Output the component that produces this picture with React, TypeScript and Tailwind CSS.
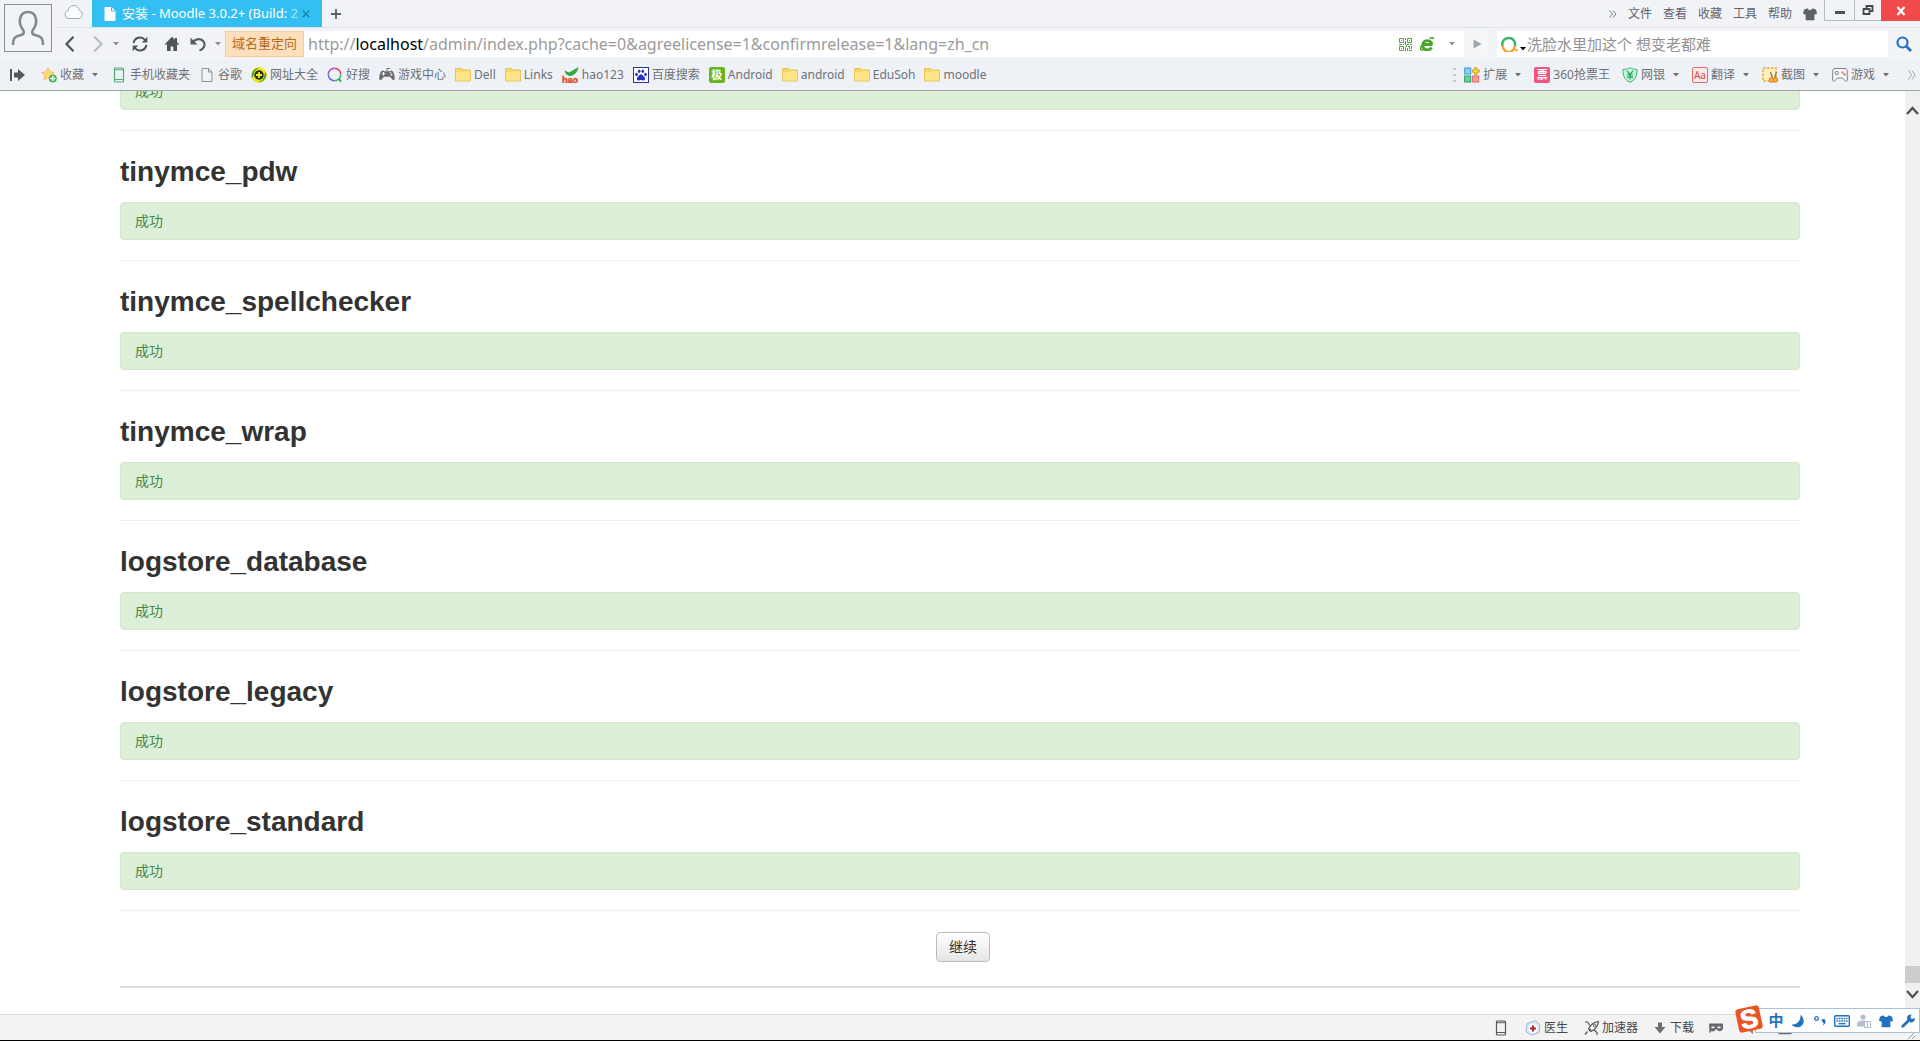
import { ReactNode } from 'react';

interface Bookmark {
  label: string;
  icon: ReactNode;
  menu?: boolean;
}

const PLUGINS = [
  'tinymce_pdw',
  'tinymce_spellchecker',
  'tinymce_wrap',
  'logstore_database',
  'logstore_legacy',
  'logstore_standard',
];

const MENUS = ['文件', '查看', '收藏', '工具', '帮助'];

const SHIRT = 'M5 1.500 1 3 0 8l3 .6V15h10V8.600l3-.6-1-5-4-1.500c-.6 1.300-1.700 2-3 2s-2.400-.7-3-2z';

function Caret({ className = 'text-[#6b7075]' }: { className?: string }) {
  return (
    <svg viewBox="0 0 8 4" className={`h-1 w-2 shrink-0 ${className}`}>
      <path d="M1 0h6L4 3.500z" fill="currentColor" />
    </svg>
  );
}

function FolderIcon() {
  return (
    <svg viewBox="0 0 16 16" className="size-4 shrink-0">
      <path d="M.5 14v-12.500h6l1.500 1.500h7.500V14z" fill="#f8d766" stroke="#e6c35c" />
      <path d="M1 5h6l1.500-1H15v9.500H1z" fill="#ffe588" />
    </svg>
  );
}

function PageIcon({ fill, stroke }: { fill: string; stroke: string }) {
  return (
    <svg viewBox="0 0 16 16" className="size-4 shrink-0">
      <path d="M3 1.500h6.500L13 5v9.500H3z" fill={fill} stroke={stroke} />
      <path d="M9.500 1.500V5H13" fill="none" stroke={fill === 'none' ? stroke : '#33bff2'} />
    </svg>
  );
}

function StarIcon() {
  return (
    <svg viewBox="0 0 16 16" className="size-4 shrink-0">
      <path d="m7 .8 1.900 4.100 4.400.5-3.300 3 .9 4.400L7 10.700l-4 2.100.9-4.400-3.300-3L5 4.900z" fill="#ffd877" stroke="#edb64d" strokeWidth=".8" />
      <circle cx="11.800" cy="11.500" r="4" fill="#4bb45c" />
      <path d="M11.800 9v5M9.300 11.500h5" stroke="#fff" strokeWidth="1.400" />
    </svg>
  );
}

function PhoneIcon({ color }: { color: string }) {
  return (
    <svg viewBox="0 0 16 16" className="size-4 shrink-0">
      <rect x="3.500" y="1" width="9" height="14" rx="1" fill="none" stroke={color} strokeWidth="1.200" />
      <path d="M3.500 12.500h9M3.500 2.700h9" stroke={color} />
    </svg>
  );
}

function SafeSiteIcon() {
  return (
    <svg viewBox="0 0 16 16" className="size-4 shrink-0">
      <circle cx="8" cy="8" r="7.800" fill="#f6e21c" />
      <path d="M1 11C-.5 5 4 .5 9 .5 5 2 2.500 5 2.500 9zM15 5c1.500 6-3 10.500-8 10.500 4-1.500 6.500-4.500 6.500-8.500z" fill="#43a332" />
      <circle cx="8" cy="8" r="4.700" fill="#20301b" />
      <path d="M8 5v6M5 8h6" stroke="#f9ec2e" strokeWidth="1.800" />
    </svg>
  );
}

function HaosouIcon() {
  return (
    <svg viewBox="0 0 16 16" className="size-4 shrink-0">
      <g fill="none" strokeWidth="1.500">
        <path d="M7.500 1.200A6.200 6.200 0 0 1 13.700 7.500" stroke="#e2406b" />
        <path d="M13.700 7.500A6.200 6.200 0 0 1 7.500 13.700" stroke="#3eb460" />
        <path d="M7.500 13.700A6.200 6.200 0 0 1 1.300 7.500" stroke="#5365dc" />
        <path d="M1.300 7.500A6.200 6.200 0 0 1 7.500 1.200" stroke="#a94bc0" />
      </g>
      <path d="m11.500 11.500 2.500 3" stroke="#2db35b" strokeWidth="2" />
    </svg>
  );
}

function GamepadIcon() {
  return (
    <svg viewBox="0 0 16 16" className="size-4 shrink-0">
      <path d="M3.500 3.500C1.500 4 .3 8 .3 11.500c0 2 2 2 3 .3L5 9.800h6l1.700 2c1 1.700 3 1.700 3-.3 0-3.500-1.200-7.500-3.200-8l-2 .8h-5z" fill="#686b70" />
      <path d="M4.500 5v3.500M2.800 6.800h3.400" stroke="#fff" strokeWidth="1.100" />
      <circle cx="11.500" cy="5.600" r=".9" fill="#f3c7c7" />
      <circle cx="12.600" cy="7.700" r=".9" fill="#fff" />
      <path d="M8 4V1.500h3" stroke="#686b70" fill="none" />
    </svg>
  );
}

function HaoIcon() {
  return (
    <svg viewBox="0 0 17 16" className="h-4 w-[17px] shrink-0">
      <path d="M2.500 3.500 7 5.500 16.500 0C15.500 5.500 12 9 8 9 5.500 9 3 6.500 2.500 3.500z" fill="#35a842" />
      <text x="0" y="15.500" fontSize="9" fontWeight="700" fill="#e2512c" stroke="#e2512c" strokeWidth=".5" fontFamily="Liberation Sans, sans-serif">hao</text>
    </svg>
  );
}

function BaiduIcon() {
  return (
    <svg viewBox="0 0 16 16" className="size-4 shrink-0">
      <rect x=".5" y=".5" width="15" height="15" fill="#fff" stroke="#2930ad" />
      <g fill="#2832c0">
        <path d="M8 7.200c1.500 0 2 1.500 3.200 2.500 1.500 1.300 1 3.800-.9 3.800-.9 0-1.400-.4-2.300-.4s-1.400.4-2.300.4c-1.900 0-2.400-2.500-.9-3.800C6 8.700 6.500 7.200 8 7.200z" />
        <ellipse cx="3.500" cy="7.500" rx="1.300" ry="1.700" />
        <ellipse cx="6.200" cy="4.200" rx="1.300" ry="1.800" />
        <ellipse cx="9.800" cy="4.200" rx="1.300" ry="1.800" />
        <ellipse cx="12.500" cy="7.500" rx="1.300" ry="1.700" />
      </g>
    </svg>
  );
}

function GlyphIcon({ text, className }: { text: string; className: string }) {
  return (
    <span className={`flex size-4 shrink-0 items-center justify-center overflow-hidden rounded-xs leading-4 ${className}`}>
      {text}
    </span>
  );
}

function ExtensionsIcon() {
  return (
    <svg viewBox="0 0 16 16" className="size-4 shrink-0">
      <rect x=".7" y="1" width="6" height="6" fill="#8fcdf5" stroke="#3d9ade" />
      <rect x=".7" y="9" width="6" height="6" fill="#5edb98" stroke="#279d62" />
      <rect x="8.700" y="9" width="6" height="6" fill="#f7a2a0" stroke="#dc6262" />
      <path d="M10.700.7h2.200v2.200h2.300v2.300h-2.300v2.300h-2.200V5.200H8.400V2.900h2.300z" fill="#fce03a" stroke="#c49716" strokeWidth=".9" />
    </svg>
  );
}

function ShieldIcon() {
  return (
    <svg viewBox="0 0 16 16" className="size-4 shrink-0">
      <path d="M8 .7c2 1.300 4.500 1.800 7 1.800 0 6-1 10-7 12.800C2 12.500 1 8.500 1 2.500c2.500 0 5-.5 7-1.800z" fill="#c8f5da" stroke="#38b46f" />
      <path d="m5 3.800 3 3.700 3-3.700M8 7.500v5M5 8h6M5 10.200h6" fill="none" stroke="#1fa45b" strokeWidth="1.200" />
    </svg>
  );
}

function CaptureIcon() {
  return (
    <svg viewBox="0 0 16 16" className="size-4 shrink-0">
      <rect x="1" y="1" width="13" height="13" fill="#fff0b8" stroke="#e7a729" strokeWidth="1.500" strokeDasharray="2.500 1.500" />
      <path d="m8.500 5 2 6M14.500 5l-2 6" stroke="#7d776c" strokeWidth="1.300" />
      <circle cx="9.500" cy="13" r="2" fill="#fbc56c" stroke="#e58e1c" strokeWidth="1.400" />
      <circle cx="13.500" cy="13" r="2" fill="#fbc56c" stroke="#e58e1c" strokeWidth="1.400" />
    </svg>
  );
}

function PadIcon() {
  return (
    <svg viewBox="0 0 16 16" className="size-4 shrink-0">
      <path d="M2 1.500h12l1.300 2v10l-1.500 1-3.300-3.500h-5L2.200 14.500l-1.500-1v-10z" fill="#f7f8fb" stroke="#7d828c" />
      <circle cx="4.800" cy="6" r="1.700" fill="none" stroke="#7d828c" />
      <path d="M9.500 4.500h2v2h-2z" fill="#ef6c4c" />
      <path d="M11.500 6.500h2v2h-2z" fill="#c46c5c" />
    </svg>
  );
}

const BOOKMARKS: Bookmark[] = [
  { label: '手机收藏夹', icon: <PhoneIcon color="#52ad76" /> },
  { label: '谷歌', icon: <PageIcon fill="none" stroke="#8e9399" /> },
  { label: '网址大全', icon: <SafeSiteIcon /> },
  { label: '好搜', icon: <HaosouIcon /> },
  { label: '游戏中心', icon: <GamepadIcon /> },
  { label: 'Dell', icon: <FolderIcon /> },
  { label: 'Links', icon: <FolderIcon /> },
  { label: 'hao123', icon: <HaoIcon /> },
  { label: '百度搜索', icon: <BaiduIcon /> },
  { label: 'Android', icon: <GlyphIcon text="极" className="bg-[#68b520] text-[11px] font-bold text-white" /> },
  { label: 'android', icon: <FolderIcon /> },
  { label: 'EduSoh', icon: <FolderIcon /> },
  { label: 'moodle', icon: <FolderIcon /> },
];

const TOOLS: Bookmark[] = [
  { label: '扩展', icon: <ExtensionsIcon />, menu: true },
  { label: '360抢票王', icon: <GlyphIcon text="票" className="bg-[#ef5580] text-[11px] font-bold text-white" /> },
  { label: '网银', icon: <ShieldIcon />, menu: true },
  {
    label: '翻译',
    icon: <GlyphIcon text="Aa" className="border border-[#dd6b6b] bg-[#fdeaea] text-[10px] text-[#d94747]" />,
    menu: true,
  },
  { label: '截图', icon: <CaptureIcon />, menu: true },
  { label: '游戏', icon: <PadIcon />, menu: true },
];

function BookmarkButton({ item }: { item: Bookmark }) {
  return (
    <button className="flex shrink-0 items-center gap-[3px] whitespace-nowrap">
      {item.icon}
      <span>{item.label}</span>
      {item.menu && (
        <span className="pl-1">
          <Caret />
        </span>
      )}
    </button>
  );
}

function TabRow() {
  return (
    <div className="flex h-7 items-start border-b border-[#e0e4e8] pl-2">
      <button aria-label="云同步" className="mt-1 mr-2">
        <svg viewBox="0 0 20 16" className="h-4 w-5">
          <path d="M5 14.500a4 4 0 0 1-.8-7.900C4.500 3.500 7 1.500 9.800 1.500c3 0 5 2 5.300 4.700A4.300 4.300 0 0 1 15 14.500z" fill="#fbfcfd" stroke="#a5abb1" />
        </svg>
      </button>
      <div className="flex h-[27px] w-[230px] items-center bg-[#33bff2] pr-3 pl-2.5 text-white">
        <PageIcon fill="#fff" stroke="#fff" />
        <span className="ml-1 min-w-0 flex-1 overflow-hidden text-[13px] whitespace-nowrap">
          安装 - Moodle 3.0.2+ (Build: <span className="text-[#a9e2f8]">2</span>
        </span>
        <button aria-label="关闭标签" className="ml-1">
          <svg viewBox="0 0 8 8" className="size-2">
            <path d="m.8.8 6.400 6.400M7.200.8.8 7.200" stroke="#197fae" strokeWidth="1.300" />
          </svg>
        </button>
      </div>
      <button aria-label="新标签" className="mt-2 ml-2">
        <svg viewBox="0 0 12 12" className="size-3">
          <path d="M6 1v10M1 6h10" stroke="#5c6166" strokeWidth="1.800" />
        </svg>
      </button>
      <div className="flex-1" />
      <nav className="flex h-[27px] items-center gap-[11px] text-xs text-[#5f646a]">
        <button aria-label="更多">
          <svg viewBox="0 0 8 8" className="size-2">
            <path d="m.5.5 3 3.500-3 3.500M4 .5l3 3.500-3 3.500" fill="none" stroke="#777c82" />
          </svg>
        </button>
        {MENUS.map((menu) => (
          <button key={menu}>{menu}</button>
        ))}
        <button aria-label="皮肤">
          <svg viewBox="0 0 16 16" className="size-3.5">
            <path d={SHIRT} fill="#5f6368" />
          </svg>
        </button>
      </nav>
      <div className="ml-[7px] flex h-[21px]">
        <button aria-label="最小化" className="flex w-[30px] items-center justify-center border-b border-l border-[#b8bcc1]">
          <span className="mt-1 h-[3px] w-2.5 bg-[#4d5156]" />
        </button>
        <button aria-label="还原" className="flex w-[27px] items-center justify-center border-b border-l border-[#b8bcc1]">
          <svg viewBox="0 0 12 12" className="size-3">
            <path d="M4.500 4V2h6v5h-2M1.500 5h6v5h-6z" fill="none" stroke="#45494e" strokeWidth="1.800" />
          </svg>
        </button>
        <button aria-label="关闭" className="flex w-[39px] items-center justify-center bg-[#f04a4a]">
          <svg viewBox="0 0 10 10" className="size-2.5">
            <path d="m1.500 1 7 8M8.500 1l-7 8" stroke="#fff" strokeWidth="2.200" />
          </svg>
        </button>
      </div>
    </div>
  );
}

function AddressRow() {
  return (
    <div className="flex h-8 items-center pl-2">
      <button aria-label="后退" className="mr-4">
        <svg viewBox="0 0 12 16" className="h-4 w-3">
          <path d="M9.500.8 2.500 8l7 7.200" fill="none" stroke="#4f5459" strokeWidth="2.200" />
        </svg>
      </button>
      <button aria-label="前进" className="mr-2">
        <svg viewBox="0 0 12 16" className="h-4 w-3">
          <path d="m2.500.8 7 7.200-7 7.200" fill="none" stroke="#b9bdc2" strokeWidth="2.200" />
        </svg>
      </button>
      <Caret className="mr-3 text-[#8a8e93]" />
      <button aria-label="刷新" className="mr-4">
        <svg viewBox="0 0 16 16" className="size-4">
          <path d="M1.600 7A6.500 6.500 0 0 1 13 3.800M14.400 9A6.500 6.500 0 0 1 3 12.200" fill="none" stroke="#4f5459" strokeWidth="2" />
          <path d="M15.300.8v5.700H9.800zM.7 15.200V9.500h5.500z" fill="#4f5459" />
        </svg>
      </button>
      <button aria-label="主页" className="mr-2.5">
        <svg viewBox="0 0 16 16" className="size-4">
          <path d="M8 .8.5 8.500H3V15h3.700v-4.500h2.600V15H13V8.500h2.500L13 6V2h-2.200v1.700z" fill="#4f5459" />
        </svg>
      </button>
      <button aria-label="撤销" className="mr-2">
        <svg viewBox="0 0 16 16" className="size-4">
          <path d="M2.500 6.500C6 2.500 11 2 13.500 5.500c2.300 3.500.5 7.500-4 9" fill="none" stroke="#5a5f64" strokeWidth="2.200" />
          <path d="M.5 1.500v7h7z" fill="#5a5f64" />
        </svg>
      </button>
      <Caret className="mr-[3px] text-[#8a8e93]" />
      <div className="flex h-[26px] flex-1 items-center bg-white">
        <button className="h-full w-[79px] shrink-0 border border-[#f6cf9f] bg-[#fde0bb] text-[13px] whitespace-nowrap text-[#b36b1f]">
          域名重定向
        </button>
        <label htmlFor="url" className="ml-1 text-base whitespace-nowrap text-[#9b9b9b]">
          http://<span className="text-black">localhost</span>
        </label>
        <input
          id="url"
          className="min-w-0 flex-1 text-base text-[#9b9b9b] outline-none"
          defaultValue="/admin/index.php?cache=0&agreelicense=1&confirmrelease=1&lang=zh_cn"
        />
        <button aria-label="二维码" className="mr-2">
          <svg viewBox="0 0 13 13" className="size-[13px]">
            <path
              d="M.5.5h4v4h-4zM8.500.5h4v4h-4zM.5 8.500h4v4h-4z"
              fill="none"
              stroke="#53a83a"
            />
            <path
              d="M2 2h1v1H2zM10 2h1v1h-1zM2 10h1v1H2zM6 0h1v2H6zM6 3h1v4H6zM0 6h3v1H0zM4 6h1v1H4zM8 6h2v1H8zM11 6h2v1h-2zM7 7h1v2H7zM9 8h2v1H9zM10 9h1v2h-1zM12 8h1v3h-1zM8 10h1v3H8zM6 9h1v4H6zM10 12h3v1h-3z"
              fill="#53a83a"
            />
          </svg>
        </button>
        <button aria-label="极速模式" className="mr-3.5">
          <svg viewBox="0 0 14 14" className="size-3.5">
            <path d="M4 7.500h8.500M11.500 10.500A4.700 4.700 0 1 1 12 7.500" fill="none" stroke="#47a52c" strokeWidth="2.800" />
            <path d="M9.500 1.500c2-1 4-1 4 .8M1.500 8.500C.2 11-.3 13.800 3.500 12.800" fill="none" stroke="#47a52c" strokeWidth="1.500" />
          </svg>
        </button>
        <button aria-label="展开地址栏" className="mr-2">
          <Caret className="text-[#8f9397]" />
        </button>
      </div>
      <button aria-label="转到" className="ml-px flex h-[26px] w-6 items-center justify-center bg-[#f5f6f7]">
        <svg viewBox="0 0 9 10" className="h-2.5 w-[9px]">
          <path d="M.5.500 8.500 5l-8 4.500z" fill="#a0a4a8" />
        </svg>
      </button>
      <div className="ml-2 flex h-[26px] w-[391px] items-center bg-white pl-1">
        <svg viewBox="0 0 18 16" className="h-4 w-[18px]">
          <g fill="none" strokeWidth="2.400">
            <path d="M1.700 10A6 6 0 0 1 8 2a6 6 0 0 1 5.700 8" stroke="#37b06d" />
            <path d="M1.700 10a6 6 0 0 0 12-.1" stroke="#f5a534" />
          </g>
          <circle cx="15.500" cy="14" r="1.300" fill="#f5a534" />
        </svg>
        <Caret className="mt-2.5" />
        <input
          aria-label="搜索"
          className="min-w-0 flex-1 text-[15px] outline-none placeholder:text-[#929292]"
          placeholder="洗脸水里加这个 想变老都难"
        />
      </div>
      <button aria-label="搜索" className="flex h-[26px] w-8 items-center justify-center">
        <svg viewBox="0 0 16 16" className="size-4">
          <circle cx="6.500" cy="6.500" r="5" fill="none" stroke="#2a6fc4" strokeWidth="2.200" />
          <path d="m10.300 10.300 4.700 4.700" stroke="#2a6fc4" strokeWidth="2.800" />
        </svg>
      </button>
    </div>
  );
}

function BookmarkBar() {
  return (
    <div className="flex h-[31px] items-center border-b border-[#9ca6a5] bg-[#eef1f6] pr-1 pl-2.5 text-xs text-[#6c7177]">
      <button aria-label="侧边栏" className="mr-[15px]">
        <svg viewBox="0 0 16 14" className="h-3.5 w-4">
          <path d="M0 1h2v12H0zM4 4.500h4V1l7 6-7 6V9.500H4z" fill="#55595e" />
        </svg>
      </button>
      <div className="mr-3">
        <BookmarkButton item={{ label: '收藏', icon: <StarIcon />, menu: true }} />
      </div>
      <div className="flex items-center gap-[9px]">
        {BOOKMARKS.map((item) => (
          <BookmarkButton key={item.label} item={item} />
        ))}
      </div>
      <div className="flex-1" />
      <svg viewBox="0 0 3 14" className="mr-2 h-3.5 w-[3px]">
        <path d="M0 0h3v2H0zM0 6h3v2H0zM0 12h3v2H0z" fill="#c4c8cd" />
      </svg>
      <div className="flex items-center gap-3">
        {TOOLS.map((item) => (
          <BookmarkButton key={item.label} item={item} />
        ))}
      </div>
      <button aria-label="更多工具" className="ml-[18px]">
        <svg viewBox="0 0 8 10" className="h-2.5 w-2">
          <path d="m.5.500 3 4.500-3 4.500M4 .5 7 5 4 9.500" fill="none" stroke="#a5a9ae" />
        </svg>
      </button>
    </div>
  );
}

function Success() {
  return (
    <div className="rounded border border-[#d3e8c6] bg-[#ddefd8] px-3.5 py-2 text-sm leading-5 text-[#468847]">成功</div>
  );
}

function Rule() {
  return <hr className="my-5 h-0.5 border-t border-b border-t-[#eeeeee] border-b-white" />;
}

function Scrollbar() {
  return (
    <div className="flex w-[15px] shrink-0 flex-col bg-[#f0f0f0]">
      <button aria-label="向上滚动" className="flex h-[38px] items-center justify-center">
        <svg viewBox="0 0 13 9" className="h-[9px] w-[13px]">
          <path d="m1 8 5.500-6L12 8" fill="none" stroke="#505050" strokeWidth="2.200" />
        </svg>
      </button>
      <div className="flex flex-1 flex-col justify-end">
        <div className="h-[17px] bg-[#cdcdcd]" />
      </div>
      <button aria-label="向下滚动" className="mb-2 flex h-[23px] items-center justify-center">
        <svg viewBox="0 0 13 9" className="h-[9px] w-[13px]">
          <path d="m1 1 5.500 6L12 1" fill="none" stroke="#505050" strokeWidth="2.200" />
        </svg>
      </button>
    </div>
  );
}

function StatusBar() {
  return (
    <footer className="flex h-[27px] items-center justify-end border-t border-b border-t-[#d9d9d9] border-b-black bg-[#f3f3f3] pr-1 text-xs text-[#43474b]">
      <button aria-label="手机助手" className="mr-4">
        <PhoneIcon color="#55595e" />
      </button>
      <button className="mr-4 flex items-center gap-[3px]">
        <svg viewBox="0 0 16 16" className="size-4">
          <path d="M2 3.500 10 .8l5 3.700-.8 8L6 15.200 1 11.500z" fill="#dfe9f6" stroke="#9fb7d6" />
          <circle cx="8" cy="8.500" r="4.500" fill="#fff" />
          <path d="M8 5.500v6M5 8.500h6" stroke="#b0242c" strokeWidth="2" />
        </svg>
        医生
      </button>
      <button className="mr-4 flex items-center gap-0.5">
        <svg viewBox="0 0 16 16" className="size-4">
          <path d="M4.500 9C6.500 5 10 2 14.500 1.500 14 6 11 9.500 7 11.500zM6 5.500 3.500 2H1M10 10l3 2.500V15M3.500 11.500 1 14.500M7 9l-2 2" fill="none" stroke="#4f5459" strokeWidth="1.200" />
          <circle cx="10.500" cy="5.500" r="1.200" fill="none" stroke="#4f5459" />
        </svg>
        加速器
      </button>
      <button className="mr-3.5 flex items-center gap-1">
        <svg viewBox="0 0 12 12" className="size-3">
          <path d="M4 .500h4V5h3.500L6 11.500.5 5H4z" fill="#6b6f74" />
        </svg>
        下载
      </button>
      <button aria-label="无痕浏览" className="mr-5">
        <svg viewBox="0 0 16 12" className="h-3 w-4">
          <path d="M1 1.500h14v5.500c-2 3-5 2.500-6 .5H7.500c-1 2-3 2.500-4 1.500L1.500 11.500z" fill="#66696e" />
          <path d="M3.500 4.500h3v1.800h-3zM9.500 4.500h3v1.800h-3z" fill="#f3f3f3" />
        </svg>
      </button>
      <button aria-label="静音" className="mr-5">
        <svg viewBox="0 0 14 14" className="size-3.5">
          <path d="M1 5h3l5-4v12L4 9H1z" fill="#85898e" />
        </svg>
      </button>
      <button aria-label="窗口" className="mr-[116px]">
        <svg viewBox="0 0 14 14" className="size-3.5">
          <path d="M1 1.500h12V12H1zM1 12.500h12" fill="none" stroke="#66696e" strokeWidth="1.600" />
        </svg>
      </button>
      <svg viewBox="0 0 8 8" className="size-2 self-end">
        <path d="m0 7 6-6M4 7l3-3" stroke="#a0a0a0" />
      </svg>
    </footer>
  );
}

// Floating input-method toolbar, sits over the status bar
function ImeBar() {
  return (
    <div className="absolute right-0 bottom-1 flex h-8 w-[185px] items-end">
      <div className="mb-1 ml-5 flex h-[25px] flex-1 items-center justify-end border border-[#a8c3e0] bg-white">
        <button className="w-[22px] text-center text-[15px] font-bold text-[#2272bd]">中</button>
        <button aria-label="半角" className="flex w-[22px] justify-center">
          <svg viewBox="0 0 14 14" className="size-3.5">
            <path d="M9.500.8C15 5 13 13 6.500 13.200 3.500 13.200 1.500 12 .5 10.300 6 11 10 7 9.500.8z" fill="#2272bd" />
          </svg>
        </button>
        <button aria-label="中文标点" className="flex w-[22px] justify-center">
          <svg viewBox="0 0 14 12" className="h-3 w-3.5">
            <circle cx="3.500" cy="3.500" r="1.800" fill="none" stroke="#2272bd" strokeWidth="1.300" />
            <path d="M9 4.500c2-1 4 0 3.500 2.500-.3 2-1.500 3-3 3.500 1-1 1.500-2 1-2.800C9 7.500 8.300 5.500 9 4.500z" fill="#2272bd" />
          </svg>
        </button>
        <button aria-label="软键盘" className="flex w-[22px] justify-center">
          <svg viewBox="0 0 16 12" className="h-3 w-4">
            <rect x=".7" y=".7" width="14.600" height="10.600" rx="1" fill="#fff" stroke="#2272bd" strokeWidth="1.400" />
            <path d="M2.500 3.500h11M2.500 6h11" stroke="#2272bd" strokeWidth="1.500" strokeDasharray="1.600 .8" />
            <path d="M4.500 8.700h7" stroke="#2272bd" strokeWidth="1.400" />
          </svg>
        </button>
        <button aria-label="用户" className="flex w-[22px] justify-center">
          <svg viewBox="0 0 14 14" className="size-3.5">
            <circle cx="6" cy="3" r="2.600" fill="#b4bcd2" />
            <path d="M0 12.500V8.500l4-2h4l3 1.500v4.500z" fill="#b4bcd2" />
            <path d="M7.500 7.500h6v6h-6zM10.500 8v5" fill="#fff" stroke="#b4bcd2" />
          </svg>
        </button>
        <button aria-label="换肤" className="flex w-[22px] justify-center">
          <svg viewBox="0 0 16 16" className="size-3.5">
            <path d={SHIRT} fill="#2272bd" />
          </svg>
        </button>
        <button aria-label="工具箱" className="flex w-[22px] justify-center">
          <svg viewBox="0 0 14 14" className="size-3.5">
            <path d="m1.800 12.200 6-6" stroke="#2272bd" strokeWidth="2.800" strokeLinecap="round" />
            <path d="M10.500.5 9.500 3.500l1.500 1.500 2.800-1c.5 3-2 5-4.300 4.500L6 5C5.500 2.500 7.500 0 10.500.5z" fill="#2272bd" />
          </svg>
        </button>
      </div>
      <svg viewBox="0 0 28 28" className="absolute bottom-1 left-0 size-7">
        <g transform="rotate(-12 14 14)">
          <rect x="2" y="2" width="24" height="24" rx="3" fill="#ea5324" />
          <text x="14" y="23" textAnchor="middle" fontSize="26" fontWeight="700" fill="#fff" stroke="#fff" fontFamily="Liberation Sans, sans-serif">S</text>
        </g>
      </svg>
    </div>
  );
}

export default function App() {
  return (
    <div className="relative flex h-screen flex-col overflow-hidden bg-white font-['Noto_Sans','Noto_Sans_CJK_SC',sans-serif]">
      <header className="shrink-0 bg-[#f1f3f6]">
        <div className="flex">
          <div className="w-14 shrink-0 p-1">
            <button aria-label="登录" className="flex size-12 items-center justify-center border border-[#8b9096]">
              <svg viewBox="0 0 36 38" className="h-[38px] w-9">
                <path d="M3 36c0-8 3-9 8-10 4-1 3-4 1.500-6C8 14 9 3 18 3s10 11 5.500 17C22 22 21 25 25 26c5 1 8 2 8 10" fill="none" stroke="#83888d" strokeWidth="2.600" />
              </svg>
            </button>
          </div>
          <div className="min-w-0 flex-1">
            <TabRow />
            <AddressRow />
          </div>
        </div>
        <BookmarkBar />
      </header>

      <div className="flex min-h-0 flex-1">
        <main className="min-w-0 flex-1 overflow-hidden pr-[105px] pl-[120px]">
          {/* page is scrolled to the end, first alert is cut by the toolbar */}
          <div className="-mt-[19px]">
            <Success />
            <Rule />
            {PLUGINS.map((name) => (
              <section key={name}>
                <h2 className="mb-2.5 font-['Liberation_Sans',sans-serif] text-[28px] leading-10 font-bold text-[#333333]">
                  {name}
                </h2>
                <Success />
                <Rule />
              </section>
            ))}
            <div className="flex justify-center pl-1.5">
              <button className="h-[30px] rounded border border-[#bbbbbb] bg-linear-to-b from-white to-[#e6e6e6] px-3 text-sm leading-5 text-[#333333]">
                继续
              </button>
            </div>
            <div className="mt-6 h-0.5 bg-[#dddddd]" />
          </div>
        </main>
        <Scrollbar />
      </div>

      <StatusBar />
      <ImeBar />
    </div>
  );
}
